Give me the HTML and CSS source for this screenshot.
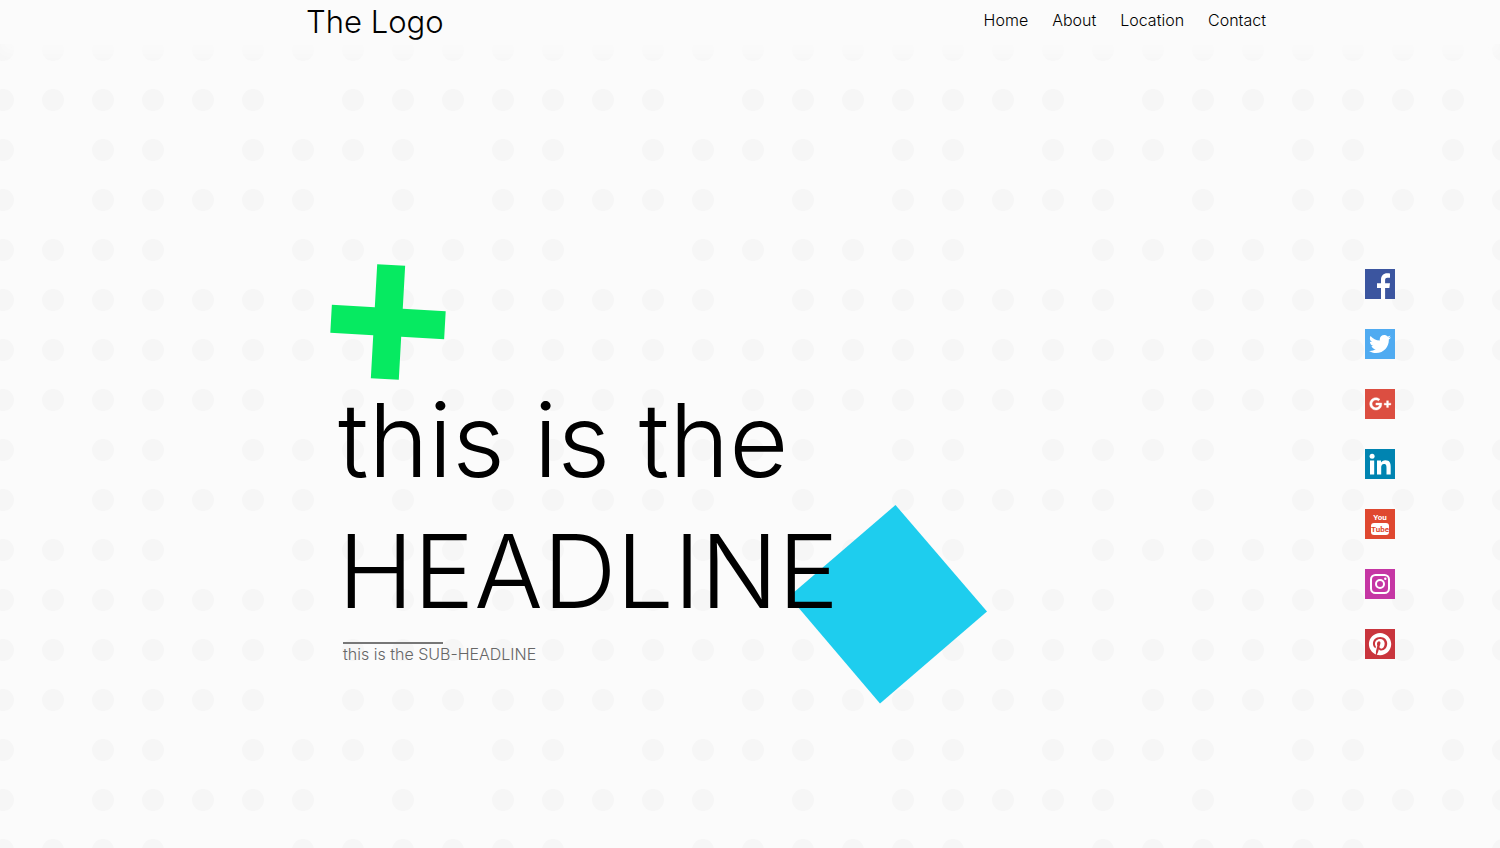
FILE: index.html
```html
<!DOCTYPE html>
<html lang="en">
<head>
<meta charset="utf-8">
<meta name="viewport" content="width=device-width, initial-scale=1">
<title>The Logo</title>
<link rel="stylesheet" href="styles.css">
</head>
<body>
<svg class="backdrop" aria-hidden="true">
  <defs>
    <pattern id="dots" x="-22" y="75" width="400" height="300" patternUnits="userSpaceOnUse">
      <g fill="#f6f6f6">
        <circle cx="25" cy="25" r="11"/><circle cx="75" cy="25" r="11"/><circle cx="125" cy="25" r="11"/><circle cx="175" cy="25" r="11"/><circle cx="225" cy="25" r="11"/><circle cx="275" cy="25" r="11"/><circle cx="375" cy="25" r="11"/>
        <circle cx="25" cy="75" r="11"/><circle cx="125" cy="75" r="11"/><circle cx="175" cy="75" r="11"/><circle cx="275" cy="75" r="11"/><circle cx="325" cy="75" r="11"/><circle cx="375" cy="75" r="11"/>
        <circle cx="25" cy="125" r="11"/><circle cx="125" cy="125" r="11"/><circle cx="175" cy="125" r="11"/><circle cx="225" cy="125" r="11"/><circle cx="275" cy="125" r="11"/><circle cx="325" cy="125" r="11"/>
        <circle cx="25" cy="175" r="11"/><circle cx="75" cy="175" r="11"/><circle cx="125" cy="175" r="11"/><circle cx="175" cy="175" r="11"/><circle cx="325" cy="175" r="11"/><circle cx="375" cy="175" r="11"/>
        <circle cx="25" cy="225" r="11"/><circle cx="75" cy="225" r="11"/><circle cx="125" cy="225" r="11"/><circle cx="175" cy="225" r="11"/><circle cx="225" cy="225" r="11"/><circle cx="275" cy="225" r="11"/><circle cx="325" cy="225" r="11"/>
        <circle cx="25" cy="275" r="11"/><circle cx="75" cy="275" r="11"/><circle cx="125" cy="275" r="11"/><circle cx="175" cy="275" r="11"/><circle cx="225" cy="275" r="11"/><circle cx="275" cy="275" r="11"/><circle cx="325" cy="275" r="11"/><circle cx="375" cy="275" r="11"/>
      </g>
    </pattern>
  </defs>
  <rect width="100%" height="100%" fill="url(#dots)"/>
</svg>

<header class="site-header">
  <a class="logo" href="#">The Logo</a>
  <nav class="menu" aria-label="Main">
    <a href="#home">Home</a>
    <a href="#about">About</a>
    <a href="#location">Location</a>
    <a href="#contact">Contact</a>
  </nav>
</header>

<main class="hero">
  <div class="intro">
    <svg class="plus" viewBox="0 0 120 120" aria-hidden="true"><path transform="rotate(3.2 60 60)" fill="#06ea61" d="M46 3h28v43h43v28H74v43H46V74H3V46h43z"/></svg>
    <div class="headline-wrap">
      <svg class="diamond" viewBox="0 0 200 200" aria-hidden="true"><path fill="#1ecdee" d="M107.500 1 199 107.500 92 199.500 1 92.500z"/></svg>
      <h1 class="headline">this is the<br>HEADLINE</h1>
    </div>
    <p class="subheadline">this is the SUB-HEADLINE</p>
  </div>
  <nav class="social" aria-label="Social media">
    <a href="#facebook" aria-label="Facebook"><svg viewBox="0 0 30 30"><path fill="#3b559f" d="M0 0h30v30H0z"/><path fill="#fff" d="M16 30V18.900h-4v-4.600h4v-3.600c0-4.100 2.500-6.500 6.200-6.500 1.100 0 2.200.1 2.800.2v4.300h-2.600c-1.900 0-2.300 1-2.300 2.400v3.200H25l-.6 4.600h-4.300V30z"/></svg></a>
    <a href="#twitter" aria-label="Twitter"><svg viewBox="0 0 30 30"><path fill="#50abf1" d="M0 0h30v30H0z"/><path fill="#fff" transform="translate(4 4) scale(.92)" d="M23.954 4.569c-.885.389-1.830.654-2.825.775 1.014-.611 1.794-1.574 2.163-2.723-.951.555-2.005.959-3.127 1.184-.896-.959-2.173-1.559-3.591-1.559-2.717 0-4.920 2.203-4.920 4.917 0 .39.045.765.127 1.124C7.691 8.094 4.066 6.130 1.640 3.161c-.427.722-.666 1.561-.666 2.475 0 1.710.870 3.213 2.188 4.096-.807-.026-1.566-.248-2.228-.616v.061c0 2.385 1.693 4.374 3.946 4.827-.413.111-.849.171-1.296.171-.314 0-.615-.03-.916-.086.631 1.953 2.445 3.377 4.604 3.417-1.680 1.319-3.809 2.105-6.102 2.105-.39 0-.779-.023-1.170-.067 2.189 1.394 4.768 2.209 7.557 2.209 9.054 0 13.999-7.496 13.999-13.986 0-.209 0-.42-.015-.63.961-.689 1.800-1.560 2.460-2.548z"/></svg></a>
    <a href="#google-plus" aria-label="Google Plus"><svg viewBox="0 0 30 30"><path fill="#dc4e41" d="M0 0h30v30H0z"/><path fill="#fff" stroke="#fff" stroke-width=".4" transform="translate(4.700 4.300) scale(.88)" d="M7 11v2.400h3.970c-.16 1.030-1.200 3.020-3.970 3.020-2.390 0-4.340-1.980-4.340-4.420S4.610 7.580 7 7.580c1.360 0 2.270.58 2.790 1.080l1.900-1.830C10.470 5.690 8.890 5 7 5c-3.870 0-7 3.130-7 7s3.130 7 7 7c4.040 0 6.720-2.840 6.720-6.840 0-.46-.05-.81-.11-1.160H7zm17 .2h-2.700V8.500h-2.100v2.700h-2.700v2.100h2.700V16h2.100v-2.700H24v-2.100z"/></svg></a>
    <a href="#linkedin" aria-label="LinkedIn"><svg viewBox="0 0 30 30"><path fill="#0084b1" d="M0 0h30v30H0z"/><circle cx="7.100" cy="7.200" r="2.500" fill="#fff"/><path fill="#fff" d="M5 11.500h4.200v14H5zM12 11.500h4v2c.7-1.300 2.200-2.300 4.400-2.300 4.400 0 5.300 2.900 5.300 6.700v7.600h-4.200v-6.800c0-1.900-.1-3.800-2.500-3.800-2.300 0-2.800 1.800-2.800 3.700v6.900H12z"/></svg></a>
    <a href="#youtube" aria-label="YouTube"><svg viewBox="0 0 30 30"><path fill="#df4830" d="M0 0h30v30H0z"/><rect x="6" y="14" width="18" height="12" rx="3" fill="#fff"/><text class="yt" x="15" y="11" fill="#fff">You</text><text class="yt" x="15" y="23" fill="#df4830">Tube</text></svg></a>
    <a href="#instagram" aria-label="Instagram"><svg viewBox="0 0 30 30"><path fill="#c536a4" d="M0 0h30v30H0z"/><g fill="none" stroke="#fff" stroke-width="2"><rect x="6" y="6" width="18" height="18" rx="4.500"/><circle cx="15" cy="15" r="4"/></g><circle cx="20.300" cy="9.700" r="1.200" fill="#fff"/></svg></a>
    <a href="#pinterest" aria-label="Pinterest"><svg viewBox="0 0 30 30"><path fill="#c9353d" d="M0 0h30v30H0z"/><path fill="#fff" transform="translate(3.900 3.900) scale(.93)" d="M12 0C5.373 0 0 5.372 0 12c0 5.084 3.163 9.426 7.627 11.174-.105-.949-.2-2.405.042-3.441.218-.937 1.407-5.965 1.407-5.965s-.359-.719-.359-1.782c0-1.668.967-2.914 2.171-2.914 1.023 0 1.518.769 1.518 1.690 0 1.029-.655 2.568-.994 3.995-.283 1.194.599 2.169 1.777 2.169 2.133 0 3.772-2.249 3.772-5.495 0-2.873-2.064-4.882-5.012-4.882-3.414 0-5.418 2.561-5.418 5.207 0 1.031.397 2.138.893 2.738.098.119.112.224.083.345l-.333 1.360c-.053.22-.174.267-.402.161-1.499-.698-2.436-2.889-2.436-4.649 0-3.785 2.750-7.262 7.929-7.262 4.163 0 7.398 2.967 7.398 6.931 0 4.136-2.607 7.464-6.227 7.464-1.216 0-2.359-.631-2.750-1.378l-.748 2.853c-.271 1.043-1.002 2.350-1.492 3.146C9.570 23.812 10.763 24 12 24c6.627 0 12-5.373 12-12 0-6.628-5.373-12-12-12z"/></svg></a>
  </nav>
</main>
</body>
</html>
```
FILE: styles.css
```css
* {
  box-sizing: border-box;
}

body {
  margin: 0;
  min-height: 100vh;
  display: flex;
  flex-direction: column;
  background: #fbfbfb;
  color: #000;
  font: 300 16px/24px Inter, "Liberation Sans", sans-serif;
}

a {
  color: inherit;
  text-decoration: none;
}

svg {
  display: block;
}

.backdrop {
  position: absolute;
  inset: 0;
  width: 100%;
  height: 100%;
  z-index: -1;
}

.site-header {
  display: flex;
  justify-content: space-between;
  align-items: flex-start;
  padding: 0 234px 0 306px;
  background: #fbfbfb;
  box-shadow: 0 10px 14px #fbfbfb;
}

.logo {
  font-size: 31px;
  line-height: 44px;
}

.menu {
  display: flex;
  gap: 24px;
  padding-top: 8px;
}

.hero {
  flex: 1;
  display: flex;
  justify-content: space-between;
  align-items: center;
  padding: 36px 7% 0 328px;
}

.intro {
  padding-bottom: 2px;
}

.plus {
  width: 120px;
  height: 120px;
  margin-bottom: -7px;
}

.headline-wrap {
  position: relative;
  width: max-content;
  padding: 0 0 5px 10px;
}

.headline {
  position: relative;
  margin: 0;
  font-size: 102px;
  line-height: 131px;
  font-weight: 340;
}

.diamond {
  position: absolute;
  top: 129px;
  left: 460px;
  width: 200px;
  height: 200px;
}

.subheadline {
  position: relative;
  margin: 0 0 0 15px;
  color: #666;
  line-height: 20px;
}

.subheadline::before {
  content: "";
  display: block;
  width: 100px;
  height: 2px;
  background: #777;
}

.social {
  display: grid;
  gap: 30px;
}

.social svg {
  width: 30px;
  height: 30px;
}

.yt {
  font: bold 8px "Liberation Sans Narrow", Roboto, sans-serif;
  text-anchor: middle;
}
```
